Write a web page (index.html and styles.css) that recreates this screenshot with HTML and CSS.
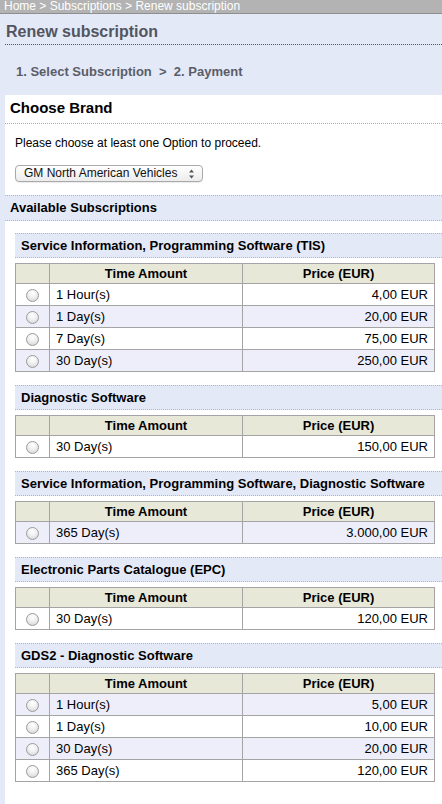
FILE: index.html
```html
<!DOCTYPE html>
<html>
<head>
<meta charset="utf-8">
<link rel="stylesheet" href="styles.css">
</head>
<body>
<div class="crumb">Home &gt; Subscriptions &gt; Renew subscription</div>
<h1 class="title">Renew subscription</h1>
<div class="steps">1. Select Subscription&nbsp;&nbsp;&gt;&nbsp;&nbsp;2. Payment</div>
<div class="panel">
  <h2 class="brand-h">Choose Brand</h2>
  <p class="hint">Please choose at least one Option to proceed.</p>
  <div class="select"><span>GM North American Vehicles</span>
    <svg class="arrows" width="7" height="10" viewBox="0 0 7 10"><path d="M3.5 0.5 L6 3.5 L1 3.5 Z M3.5 9.5 L6 6.5 L1 6.5 Z" fill="#555"/></svg>
  </div>
  <h2 class="avail-h">Available Subscriptions</h2>
  <div class="subs">
    <div class="sub">
      <h3 class="sub-h">Service Information, Programming Software (TIS)</h3>
      <table class="grid">
        <colgroup><col class="w-r"><col class="w-t"><col></colgroup>
        <tr><th></th><th>Time Amount</th><th>Price (EUR)</th></tr>
        <tr><td class="c-r"><span class="radio"></span></td><td class="c-t">1 Hour(s)</td><td class="c-p">4,00 EUR</td></tr>
        <tr class="alt"><td class="c-r"><span class="radio"></span></td><td class="c-t">1 Day(s)</td><td class="c-p">20,00 EUR</td></tr>
        <tr><td class="c-r"><span class="radio"></span></td><td class="c-t">7 Day(s)</td><td class="c-p">75,00 EUR</td></tr>
        <tr class="alt"><td class="c-r"><span class="radio"></span></td><td class="c-t">30 Day(s)</td><td class="c-p">250,00 EUR</td></tr>
      </table>
    </div>
    <div class="sub">
      <h3 class="sub-h">Diagnostic Software</h3>
      <table class="grid">
        <colgroup><col class="w-r"><col class="w-t"><col></colgroup>
        <tr><th></th><th>Time Amount</th><th>Price (EUR)</th></tr>
        <tr><td class="c-r"><span class="radio"></span></td><td class="c-t">30 Day(s)</td><td class="c-p">150,00 EUR</td></tr>
      </table>
    </div>
    <div class="sub">
      <h3 class="sub-h">Service Information, Programming Software, Diagnostic Software</h3>
      <table class="grid">
        <colgroup><col class="w-r"><col class="w-t"><col></colgroup>
        <tr><th></th><th>Time Amount</th><th>Price (EUR)</th></tr>
        <tr class="alt"><td class="c-r"><span class="radio"></span></td><td class="c-t">365 Day(s)</td><td class="c-p">3.000,00 EUR</td></tr>
      </table>
    </div>
    <div class="sub">
      <h3 class="sub-h">Electronic Parts Catalogue (EPC)</h3>
      <table class="grid">
        <colgroup><col class="w-r"><col class="w-t"><col></colgroup>
        <tr><th></th><th>Time Amount</th><th>Price (EUR)</th></tr>
        <tr><td class="c-r"><span class="radio"></span></td><td class="c-t">30 Day(s)</td><td class="c-p">120,00 EUR</td></tr>
      </table>
    </div>
    <div class="sub">
      <h3 class="sub-h">GDS2 - Diagnostic Software</h3>
      <table class="grid">
        <colgroup><col class="w-r"><col class="w-t"><col></colgroup>
        <tr><th></th><th>Time Amount</th><th>Price (EUR)</th></tr>
        <tr class="alt"><td class="c-r"><span class="radio"></span></td><td class="c-t">1 Hour(s)</td><td class="c-p">5,00 EUR</td></tr>
        <tr><td class="c-r"><span class="radio"></span></td><td class="c-t">1 Day(s)</td><td class="c-p">10,00 EUR</td></tr>
        <tr class="alt"><td class="c-r"><span class="radio"></span></td><td class="c-t">30 Day(s)</td><td class="c-p">20,00 EUR</td></tr>
        <tr><td class="c-r"><span class="radio"></span></td><td class="c-t">365 Day(s)</td><td class="c-p">120,00 EUR</td></tr>
      </table>
    </div>
  </div>
</div>
</body>
</html>
```

FILE: styles.css
```css
html, body {
  margin: 0;
  padding: 0;
}
body {
  background: #e4e9f7;
  font-family: "Liberation Sans", Arial, sans-serif;
  color: #000;
  min-height: 804px;
}
.crumb {
  background: #b3b3b3;
  color: #fff;
  font-size: 12px;
  height: 13px;
  line-height: 13px;
  padding-left: 4px;
  border-bottom: 1px solid #8e8e8e;
  white-space: nowrap;
  overflow: hidden;
}
.title {
  margin: 0 0 0 5px;
  padding: 9px 0 3px 1px;
  font-size: 16px;
  line-height: 18px;
  font-weight: bold;
  color: #525560;
  border-bottom: 1px dotted #555;
}
.steps {
  padding: 19px 0 15px 16px;
  font-size: 13px;
  line-height: 16px;
  font-weight: bold;
  color: #5a5d68;
}
.panel {
  margin-left: 5px;
  background: #fff;
  padding-bottom: 30px;
}
.brand-h {
  margin: 0;
  padding: 4px 0 7px 5px;
  font-size: 15px;
  line-height: 17px;
  font-weight: bold;
  border-bottom: 1px dotted #a8a8a8;
}
.hint {
  margin: 12px 0 0 10px;
  font-size: 12px;
  line-height: 14px;
}
.select {
  margin: 15px 0 0 10px;
  width: 188px;
  height: 17px;
  box-sizing: border-box;
  border: 1px solid #a9a9a9;
  border-radius: 4px;
  background: linear-gradient(#ffffff, #ececec);
  display: flex;
  align-items: center;
  justify-content: space-between;
  padding: 0 7px 0 8px;
  font-size: 12px;
  color: #111;
  box-shadow: 0 1px 1px rgba(0,0,0,0.08);
}
.select span {
  line-height: 15px;
}
.arrows {
  display: block;
}
.avail-h {
  margin: 13px 0 0 0;
  padding: 0 0 0 5px;
  background: #e4e9f7;
  border-top: 1px dotted #b0b4c4;
  border-bottom: 1px dotted #b0b4c4;
  font-size: 13px;
  line-height: 24px;
  height: 24px;
  font-weight: bold;
}
.subs {
  padding: 12px 7px 0 10px;
}
.sub {
  margin-bottom: 13px;
}
.sub-h {
  margin: 0 -7px 5px 0;
  padding-left: 6px;
  background: #e4e9f7;
  border-top: 1px dotted #b0b4c4;
  border-bottom: 1px dotted #b0b4c4;
  font-size: 13px;
  line-height: 23px;
  height: 23px;
  font-weight: bold;
  white-space: nowrap;
}
.grid {
  width: 100%;
  border-collapse: collapse;
  table-layout: fixed;
  font-size: 13px;
}
.w-r {
  width: 34px;
}
.w-t {
  width: 193px;
}
.grid th, .grid td {
  border: 1px solid #a4a4a4;
  padding: 0;
}
.grid th {
  background: #e8e8d9;
  font-weight: bold;
  height: 19px;
  line-height: 16px;
  text-align: center;
}
.grid td {
  height: 21px;
  line-height: 16px;
}
.grid tr.alt td {
  background: #eeeefb;
}
.c-r {
  text-align: center;
}
.c-t {
  text-align: left;
  padding-left: 6px !important;
}
.c-p {
  text-align: right;
  padding-right: 6px !important;
}
.radio {
  display: inline-block;
  vertical-align: middle;
  width: 13px;
  height: 13px;
  box-sizing: border-box;
  border-radius: 50%;
  border: 1px solid #9c9c9c;
  background: radial-gradient(circle at 50% 30%, #ffffff 0%, #f0f0f0 45%, #cfcfcf 100%);
}
```
